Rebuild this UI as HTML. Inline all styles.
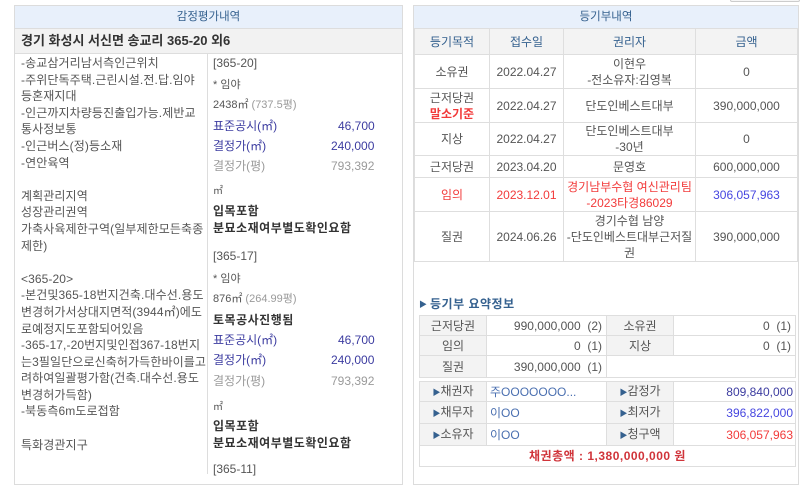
<!DOCTYPE html>
<html><head><meta charset="utf-8"><style>
*{margin:0;padding:0;box-sizing:border-box}
body{width:800px;height:470px;overflow:hidden;background:#fff;font-family:"Liberation Sans","Noto Sans CJK KR","NanumGothic",sans-serif;font-size:12px;color:#555;position:relative}
.a{position:absolute;white-space:nowrap;line-height:16px}
.box{position:absolute;border:1px solid #dcdcdc}
.hd{position:absolute;background:#e8f0fb;color:#35618f;text-align:center;line-height:22px;font-size:11.5px}
table{border-collapse:collapse;position:absolute}
td{border:1px solid #dedede;text-align:center;font-size:12px;color:#555;line-height:16px}
.g{background:#f3f3f3}
.bl{color:#3c3ca0}.gr{color:#9a9a9a}.rd{color:#f23a3a}
.b{font-weight:bold;color:#333;letter-spacing:0.5px}
.ls{letter-spacing:0.1px}
</style></head><body>
<div style="position:absolute;left:730px;top:-4px;width:70px;height:6px;border:1px solid #ccc;border-radius:2px;background:#f6f6f6"></div>
<!-- left panel -->
<div class="box" style="left:14px;top:5px;width:389px;height:480px"></div>
<div class="hd" style="left:15px;top:6px;width:387px;height:22px">감정평가내역</div>
<div style="position:absolute;left:15px;top:28px;width:387px;height:26px;background:#f2f2f2;border-top:1px solid #ddd;border-bottom:1px solid #ddd"></div>
<div class="a" style="left:21px;top:33px;font-size:13px;font-weight:bold;color:#333">경기 화성시 서신면 송교리 365-20 외6</div>
<div style="position:absolute;left:207px;top:54px;width:1px;height:420px;background:#ddd"></div>
<div class="a ls" style="left:21px;top:55px;line-height:16.6px;font-size:12px">-송교삼거리남서측인근위치<br>-주위단독주택.근린시설.전.답.임야<br>등혼재지대<br>-인근까지차량등진출입가능.제반교<br>통사정보통<br>-인근버스(정)등소재<br>-연안육역<br><br>계획관리지역<br>성장관리권역<br>가축사육제한구역(일부제한모든축종<br>제한)<br><br>&lt;365-20&gt;<br>-본건및365-18번지건축.대수선.용도<br>변경허가서상대지면적(3944㎡)에도<br>로예정지도포함되어있음<br>-365-17,-20번지및인접367-18번지<br>는3필일단으로신축허가득한바이를고<br>려하여일괄평가함(건축.대수선.용도<br>변경허가득함)<br>-북동측6m도로접함<br><br>특화경관지구</div>
<div class="a" style="left:213px;top:55px">[365-20]</div>
<div class="a" style="left:213px;top:77px;font-size:11px">* 임야</div>
<div class="a" style="left:213px;top:97px;font-size:11px">2438㎡ <span class="gr">(737.5평)</span></div>
<div class="a bl" style="left:213px;top:118px">표준공시(㎡)</div><div class="a bl" style="left:338px;top:118px">46,700</div>
<div class="a bl" style="left:213px;top:138px">결정가(㎡)</div><div class="a bl" style="left:331px;top:138px">240,000</div>
<div class="a gr" style="left:213px;top:158px">결정가(평)</div><div class="a gr" style="left:331px;top:158px">793,392</div>
<div class="a" style="left:213px;top:184px;font-size:10px">㎡</div>
<div class="a b" style="left:213px;top:203px">입목포함</div>
<div class="a b" style="left:213px;top:220px">분묘소재여부별도확인요함</div>
<div class="a" style="left:213px;top:248px">[365-17]</div>
<div class="a" style="left:213px;top:271px;font-size:11px">* 임야</div>
<div class="a" style="left:213px;top:291px;font-size:11px">876㎡ <span class="gr">(264.99평)</span></div>
<div class="a b" style="left:213px;top:312px">토목공사진행됨</div>
<div class="a bl" style="left:213px;top:332px">표준공시(㎡)</div><div class="a bl" style="left:338px;top:332px">46,700</div>
<div class="a bl" style="left:213px;top:352px">결정가(㎡)</div><div class="a bl" style="left:331px;top:352px">240,000</div>
<div class="a gr" style="left:213px;top:373px">결정가(평)</div><div class="a gr" style="left:331px;top:373px">793,392</div>
<div class="a" style="left:213px;top:400px;font-size:10px">㎡</div>
<div class="a b" style="left:213px;top:418px">입목포함</div>
<div class="a b" style="left:213px;top:435px">분묘소재여부별도확인요함</div>
<div class="a" style="left:213px;top:461px">[365-11]</div>
<!-- right panel -->
<div class="box" style="left:413px;top:5px;width:386px;height:480px"></div>
<div class="hd" style="left:414px;top:6px;width:384px;height:22px">등기부내역</div>
<table style="left:414px;top:28px;width:384px">
<tr style="height:26px" class="g"><td style="width:75px;color:#35618f">등기목적</td><td style="width:74px;color:#35618f">접수일</td><td style="width:132px;color:#35618f">권리자</td><td style="color:#35618f">금액</td></tr>
<tr style="height:34px"><td>소유권</td><td>2022.04.27</td><td>이현우<br>-전소유자:김영복</td><td>0</td></tr>
<tr style="height:34px"><td>근저당권<br><b class="rd">말소기준</b></td><td>2022.04.27</td><td>단도인베스트대부</td><td>390,000,000</td></tr>
<tr style="height:33px"><td>지상</td><td>2022.04.27</td><td>단도인베스트대부<br>-30년</td><td>0</td></tr>
<tr style="height:22px"><td>근저당권</td><td>2023.04.20</td><td>문영호</td><td>600,000,000</td></tr>
<tr style="height:34px"><td class="rd">임의</td><td class="rd">2023.12.01</td><td class="rd">경기남부수협 여신관리팀<br>-2023타경86029</td><td style="color:#4646e0">306,057,963</td></tr>
<tr style="height:50px"><td>질권</td><td>2024.06.26</td><td>경기수협 남양<br>-단도인베스트대부근저질<br>권</td><td>390,000,000</td></tr>
</table>
<div class="a" style="left:419px;top:297px;font-size:8px;color:#35618f">▶</div>
<div class="a" style="left:430px;top:296px;font-weight:bold;color:#35618f;letter-spacing:0.5px">등기부 요약정보</div>
<table style="left:419px;top:315px;width:377px">
<tr style="height:20px"><td class="g" style="width:67px">근저당권</td><td style="width:120px;text-align:right;padding-right:4px">990,000,000 &nbsp;(2)</td><td class="g" style="width:67px">소유권</td><td style="text-align:right;padding-right:4px">0 &nbsp;(1)</td></tr>
<tr style="height:20px"><td class="g">임의</td><td style="text-align:right;padding-right:4px">0 &nbsp;(1)</td><td class="g">지상</td><td style="text-align:right;padding-right:4px">0 &nbsp;(1)</td></tr>
<tr style="height:22px"><td class="g">질권</td><td style="text-align:right;padding-right:4px">390,000,000 &nbsp;(1)</td><td colspan="2"></td></tr>
</table>
<table style="left:419px;top:381px;width:377px">
<tr style="height:20px"><td class="g" style="width:67px"><span style="font-size:8px;color:#35618f">▶</span>채권자</td><td style="width:120px;text-align:left;padding-left:3px;color:#4a6fb0">주OOOOOOO...</td><td class="g" style="width:67px"><span style="font-size:8px;color:#35618f">▶</span>감정가</td><td style="text-align:right;padding-right:2px" class="bl">809,840,000</td></tr>
<tr style="height:22px"><td class="g"><span style="font-size:8px;color:#35618f">▶</span>채무자</td><td style="text-align:left;padding-left:3px;color:#4a6fb0">이OO</td><td class="g"><span style="font-size:8px;color:#35618f">▶</span>최저가</td><td style="text-align:right;padding-right:2px;color:#4646e0">396,822,000</td></tr>
<tr style="height:22px"><td class="g"><span style="font-size:8px;color:#35618f">▶</span>소유자</td><td style="text-align:left;padding-left:3px;color:#4a6fb0">이OO</td><td class="g"><span style="font-size:8px;color:#35618f">▶</span>청구액</td><td style="text-align:right;padding-right:2px" class="rd">306,057,963</td></tr>
<tr style="height:21px"><td colspan="4" style="color:#d0343a;font-weight:bold;letter-spacing:0.5px">채권총액 : 1,380,000,000 원</td></tr>
</table>
</body></html>
